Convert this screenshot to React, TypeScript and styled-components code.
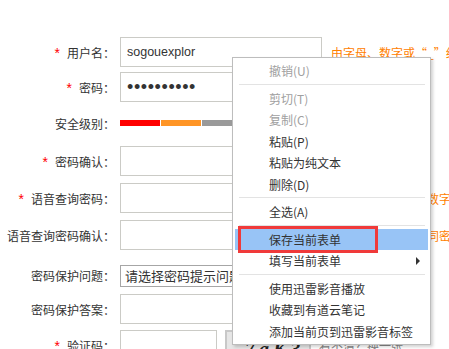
import React from 'react';
import styled, { createGlobalStyle } from 'styled-components';

const GlobalStyle = createGlobalStyle`
  html, body {
    margin: 0;
    padding: 0;
    overflow: hidden;
    background: #fff;
  }
  body {
    font-family: "Noto Sans CJK SC", "Liberation Sans", sans-serif;
  }
`;

const Page = styled.div`
  position: relative;
  width: 449px;
  height: 349px;
  overflow: hidden;
  background: #fff;
`;

const Form = styled.div`
  display: flex;
  flex-direction: column;
  padding-top: 37px;
`;

const Row = styled.div<{ $mt?: number; $h?: number }>`
  display: flex;
  align-items: center;
  flex-shrink: 0;
  margin-top: ${p => p.$mt ?? 0}px;
  height: ${p => p.$h ?? 30}px;
`;

const Label = styled.label`
  width: 115px;
  margin-right: 5px;
  flex-shrink: 0;
  text-align: right;
  white-space: nowrap;
  font-size: 12px;
  color: #333;
`;

const Star = styled.span`
  color: #ff0000;
  font-family: "Liberation Sans", sans-serif;
  font-size: 14px;
  margin-right: 7px;
`;

const TextBox = styled.input<{ $w?: number; $secret?: boolean }>`
  box-sizing: border-box;
  flex-shrink: 0;
  width: ${p => p.$w ?? 202}px;
  height: 30px;
  padding: 0 6px;
  border: 1px solid #cbcbc6;
  outline: none;
  background: #fff;
  color: #333;
  font: ${p => (p.$secret ? '18px' : '12.5px')} "Liberation Sans", sans-serif;
  letter-spacing: ${p => (p.$secret ? '0.6px' : 'normal')};
`;

const Select = styled.select`
  box-sizing: border-box;
  flex-shrink: 0;
  width: 200px;
  height: 22px;
  padding: 0 4px;
  border: 1px solid #a6a6a6;
  border-radius: 0;
  appearance: none;
  background: #fff;
  color: #333;
  font: 13px "Noto Sans CJK SC", sans-serif;
`;

const Hint = styled.span`
  margin-left: 9px;
  white-space: nowrap;
  color: #ff8000;
  font-size: 12px;
`;

const Strength = styled.div`
  display: flex;
  gap: 1px;
`;

const Seg = styled.div<{ $c: string }>`
  width: 40px;
  height: 6px;
  background: ${p => p.$c};
`;

const Captcha = styled.div`
  box-sizing: border-box;
  flex-shrink: 0;
  width: 86px;
  height: 30px;
  margin-left: 8px;
  border: 2px solid #c8c8c8;
  background: #e6e6e6;
  color: #222;
  font: italic bold 20px "Liberation Serif", serif;
  letter-spacing: 4px;
  padding-left: 18px;
  line-height: 34px;
  overflow: hidden;
`;

const Refresh = styled.span`
  margin-left: 8px;
  color: #888;
  font-size: 12px;
  white-space: nowrap;
`;

const Menu = styled.ul`
  position: absolute;
  left: 232px;
  top: 57px;
  width: 199px;
  box-sizing: border-box;
  margin: 0;
  padding: 2px;
  list-style: none;
  background: #fff;
  border: 1px solid #bdbdbd;
  box-shadow: 2px 2px 3px rgba(0, 0, 0, 0.18);
  font: 12px "Noto Sans CJK SC", sans-serif;
`;

const Item = styled.li<{ $disabled?: boolean; $active?: boolean }>`
  height: 21.5px;
  display: flex;
  align-items: center;
  justify-content: space-between;
  padding: 0 8px 0 34px;
  white-space: nowrap;
  color: ${p => (p.$disabled ? '#a0a0a0' : '#333')};
  background: ${p => (p.$active ? '#98c4f6' : 'transparent')};
`;

const Sep = styled.li`
  height: 1px;
  margin: 2px 3px 3px 4px;
  background: #e3e3e3;
`;

const Arrow = styled.span`
  width: 0;
  height: 0;
  border-left: 4px solid #333;
  border-top: 4px solid transparent;
  border-bottom: 4px solid transparent;
`;

const Mark = styled.div`
  position: absolute;
  left: 238px;
  top: 226px;
  width: 140px;
  height: 27px;
  box-sizing: border-box;
  border: 3px solid #f03a3a;
`;

const App: React.FC = () => {
  return (
    <Page>
      <GlobalStyle />
      <Form>
        <Row>
          <Label><Star>*</Star>用户名：</Label>
          <TextBox readOnly defaultValue="sogouexplor" />
          <Hint>由字母、数字或“_”组成，长度为4-16个字符</Hint>
        </Row>
        <Row $mt={5}>
          <Label><Star>*</Star>密码：</Label>
          <TextBox $secret type="password" readOnly defaultValue="1234567890" />
        </Row>
        <Row $h={42}>
          <Label>安全级别：</Label>
          <Strength>
            <Seg $c="#ff0000" />
            <Seg $c="#ff9526" />
            <Seg $c="#9a9a9a" />
          </Strength>
        </Row>
        <Row $mt={2}>
          <Label><Star>*</Star>密码确认：</Label>
          <TextBox readOnly />
        </Row>
        <Row $mt={7}>
          <Label><Star>*</Star>语音查询密码：</Label>
          <TextBox readOnly />
          <Hint>查询密码必须为纯数字组成</Hint>
        </Row>
        <Row $mt={7}>
          <Label>语音查询密码确认：</Label>
          <TextBox readOnly />
          <Hint>请再次输入一遍相同密码</Hint>
        </Row>
        <Row $mt={7} $h={37}>
          <Label>密码保护问题：</Label>
          <Select defaultValue="">
            <option value="">请选择密码提示问题</option>
          </Select>
        </Row>
        <Row>
          <Label>密码保护答案：</Label>
          <TextBox readOnly />
        </Row>
        <Row $mt={6}>
          <Label><Star>*</Star>验证码：</Label>
          <TextBox $w={97} readOnly />
          <Captcha>7aK3</Captcha>
          <Refresh>看不清？换一张</Refresh>
        </Row>
      </Form>

      <Menu>
        <Item $disabled>撤销(U)</Item>
        <Sep />
        <Item $disabled>剪切(T)</Item>
        <Item $disabled>复制(C)</Item>
        <Item>粘贴(P)</Item>
        <Item>粘贴为纯文本</Item>
        <Item>删除(D)</Item>
        <Sep />
        <Item>全选(A)</Item>
        <Sep />
        <Item $active>保存当前表单</Item>
        <Item>填写当前表单<Arrow /></Item>
        <Sep />
        <Item>使用迅雷影音播放</Item>
        <Item>收藏到有道云笔记</Item>
        <Item>添加当前页到迅雷影音标签</Item>
      </Menu>
      <Mark />
    </Page>
  );
};

export default App;
